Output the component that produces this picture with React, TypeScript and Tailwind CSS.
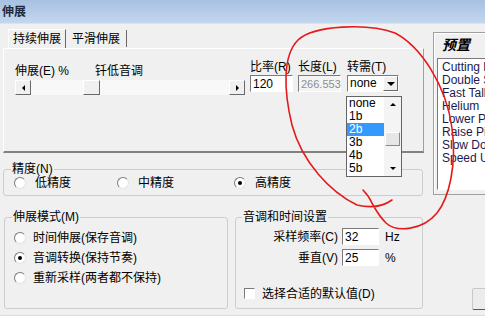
import React from "react";

function Arrow({ dir, size = 5 }: { dir: "left" | "right" | "up" | "down"; size?: number }) {
  const pts = {
    left: "4,0 4,8 0,4",
    right: "0,0 0,8 4,4",
    up: "0,4 8,4 4,0",
    down: "0,0 8,0 4,4",
  }[dir];
  const w = dir === "left" || dir === "right" ? 4 : 8;
  const h = dir === "left" || dir === "right" ? 8 : 4;
  return (
    <svg width={(w * size) / 8} height={(h * size) / 8} viewBox={`0 0 ${w} ${h}`}>
      <polygon points={pts} fill="#000" />
    </svg>
  );
}

function Radio({ checked = false }: { checked?: boolean }) {
  return (
    <span className="flex h-[12px] w-[12px] shrink-0 items-center justify-center rounded-full border border-[#7a7a7a] border-r-[#e3e3e3] border-b-[#e3e3e3] bg-white">
      {checked && <span className="h-[4px] w-[4px] rounded-full bg-black" />}
    </span>
  );
}

function Edit({ value, disabled = false, w }: { value: string; disabled?: boolean; w: string }) {
  return (
    <div
      className={`${w} flex h-[17px] items-center border border-[#7a7a7a] border-r-white border-b-white pl-[2px] ${
        disabled ? "bg-[#f4f4f4] text-[11px] text-[#8d8d8d]" : "bg-white"
      }`}
    >
      {value}
    </div>
  );
}

function ScrollBtn({ dir }: { dir: "left" | "right" }) {
  return (
    <div className="flex h-[15px] w-[16px] items-center justify-center border border-white border-r-[#696969] border-b-[#696969] bg-[#f0f0f0]">
      <Arrow dir={dir} size={6} />
    </div>
  );
}

const presets = ["Cutting Pitch", "Double Speed", "Fast Talk", "Helium", "Lower Pitch", "Raise Pitch", "Slow Down", "Speed Up"];
const keys = ["none", "1b", "2b", "3b", "4b", "5b"];

export default function App() {
  return (
    <div className="relative flex h-[324px] w-[500px] overflow-hidden bg-white font-['Liberation_Sans','Noto_Sans_CJK_SC',sans-serif] text-[12px] leading-[14px] text-black">
      <div className="flex h-[316px] w-[485px] shrink-0 flex-col overflow-hidden border-b border-[#cfdff0] bg-[#f0f0f0]">
        {/* title bar */}
        <div className="flex h-[24px] shrink-0 items-center border-b border-[#d5e3f2] bg-gradient-to-b from-[#a7c1e2] to-[#c3d7ee] pl-[2px] font-bold text-[#1e2a3a]">
          伸展
        </div>

        <div className="flex">
          {/* left column */}
          <div className="w-[424px] shrink-0 pl-[3px]">
            {/* tabs */}
            <div className="mt-[5px] flex h-[19px] items-end pl-[5px]">
              <div className="flex h-[19px] items-center border border-b-0 border-white border-r-[#696969] px-[4px]">持续伸展</div>
              <div className="mb-[1px] flex h-[17px] items-center border-r border-[#696969] px-[6px]">平滑伸展</div>
            </div>
            <div className="flex h-[105px] w-[421px] border border-white border-r-[#a0a0a0] border-b-2 border-b-[#808080] pl-[11px] pt-[11px]">
              <div className="w-[230px]">
                <div className="mt-[4px] flex h-[14px]">
                  <span className="w-[80px]">伸展(E) %</span>
                  <span>钎低音调</span>
                </div>
                <div className="mt-[2px] flex h-[15px] bg-[#f8f8f8]">
                  <ScrollBtn dir="left" />
                  <div className="ml-[52px] h-[15px] w-[17px] border border-white border-r-[#696969] border-b-[#696969] bg-[#f0f0f0]" />
                  <div className="flex-1" />
                  <ScrollBtn dir="right" />
                </div>
              </div>
              <div className="ml-[5px] w-[43px]">
                <div className="h-[14px]">比率(R)</div>
                <div className="mt-[1px]">
                  <Edit value="120" w="w-[43px]" />
                </div>
              </div>
              <div className="ml-[5px] w-[43px]">
                <div className="h-[14px]">长度(L)</div>
                <div className="mt-[1px]">
                  <Edit value="266.553" disabled w="w-[43px]" />
                </div>
              </div>
              <div className="relative ml-[6px] w-[52px]">
                <div className="h-[14px]">转需(T)</div>
                <div className="mt-[1px] flex h-[17px] border border-[#7a7a7a] border-r-white border-b-white bg-white">
                  <span className="flex-1 pl-[2px] leading-[15px]">none</span>
                  <div className="flex w-[15px] items-center justify-center border border-white border-r-[#696969] border-b-[#696969] bg-[#f0f0f0]">
                    <Arrow dir="down" size={8} />
                  </div>
                </div>
                {/* open drop-down list */}
                <div className="absolute left-[-1px] top-[36px] z-10 flex h-[81px] w-[56px] border border-[#646464] bg-white">
                  <div className="w-[37px]">
                    {keys.map((k) => (
                      <div
                        key={k}
                        className={`h-[13px] pl-[2px] text-[12px] leading-[13px] ${k === "2b" ? "bg-[#3399ff] text-white" : ""}`}
                      >
                        {k}
                      </div>
                    ))}
                  </div>
                  <div className="flex w-[17px] flex-col bg-[#f4f4f4]">
                    <div className="flex h-[15px] items-center justify-center">
                      <Arrow dir="up" size={6} />
                    </div>
                    <div className="mx-[1px] mt-[20px] h-[14px] border border-white border-r-[#8a8a8a] border-b-[#8a8a8a] bg-[#e6e6e6]" />
                    <div className="flex-1" />
                    <div className="flex h-[15px] items-center justify-center">
                      <Arrow dir="down" size={6} />
                    </div>
                  </div>
                </div>
              </div>
            </div>

            {/* precision */}
            <fieldset className="mt-[9px] w-[420px] rounded-[3px] border border-[#cdcdcd] pb-[5px]">
              <legend className="ml-[7px] px-[1px] leading-[14px]">精度(N)</legend>
              <div className="flex h-[14px] items-center pl-[10px]">
                <div className="flex w-[103px] items-center">
                  <Radio />
                  <span className="ml-[9px]">低精度</span>
                </div>
                <div className="flex w-[117px] items-center">
                  <Radio />
                  <span className="ml-[9px]">中精度</span>
                </div>
                <div className="flex items-center">
                  <Radio checked />
                  <span className="ml-[9px]">高精度</span>
                </div>
              </div>
            </fieldset>

            {/* bottom groups */}
            <div className="mt-[14px] flex">
              <fieldset className="ml-[1px] h-[99px] w-[224px] rounded-[3px] border border-[#cdcdcd]">
                <legend className="ml-[7px] px-[1px] leading-[14px]">伸展模式(M)</legend>
                <div className="pl-[9px] pt-[4px]">
                  {[
                    ["时间伸展(保存音调)", false],
                    ["音调转换(保持节奏)", true],
                    ["重新采样(两者都不保持)", false],
                  ].map(([t, c]) => (
                    <div key={t as string} className="flex h-[20px] items-center">
                      <Radio checked={c as boolean} />
                      <span className="ml-[7px]">{t as string}</span>
                    </div>
                  ))}
                </div>
              </fieldset>
              <fieldset className="ml-[7px] h-[99px] w-[188px] rounded-[3px] border border-[#cdcdcd]">
                <legend className="ml-[6px] px-[1px] leading-[14px]">音调和时间设置</legend>
                <div className="pt-[4px]">
                  <div className="flex h-[17px] items-center">
                    <span className="w-[102px] text-right">采样频率(C)</span>
                    <div className="ml-[4px]">
                      <Edit value="32" w="w-[37px]" />
                    </div>
                    <span className="ml-[6px]">Hz</span>
                  </div>
                  <div className="mt-[4px] flex h-[17px] items-center">
                    <span className="w-[102px] text-right">垂直(V)</span>
                    <div className="ml-[4px]">
                      <Edit value="25" w="w-[37px]" />
                    </div>
                    <span className="ml-[6px]">%</span>
                  </div>
                  <div className="mt-[20px] flex h-[15px] items-center pl-[8px]">
                    <span className="h-[11px] w-[11px] border border-[#7a7a7a] border-r-white border-b-white bg-white" />
                    <span className="ml-[7px]">选择合适的默认值(D)</span>
                  </div>
                </div>
              </fieldset>
            </div>
          </div>

          {/* right column */}
          <div className="ml-[9px] flex-1">
            <div className="mt-[8px] h-[163px] w-[70px] border border-[#a0a0a0] shadow-[inset_1px_1px_0_#ffffff]">
              <div className="pl-[8px] pt-[4px] text-[14px] font-bold italic leading-[16px]">预置</div>
              <div className="ml-[3px] mt-[5px] h-[132px] w-[62px] border border-[#7a7a7a] border-r-white border-b-white bg-white pl-[4px] pt-[2px]">
                {presets.map((p) => (
                  <div key={p} className="h-[13px] whitespace-nowrap leading-[13px] text-[#1a1a50]">
                    {p}
                  </div>
                ))}
              </div>
            </div>
            <div className="ml-[39px] mt-[93px] h-[22px] w-[40px] rounded-[2px] border border-[#c8c8c8] border-b-[#5a5a5a] bg-[#ececec]" />
          </div>
        </div>
      </div>

      {/* red hand-drawn annotation */}
      <svg className="pointer-events-none absolute left-0 top-0" width="500" height="324" viewBox="0 0 500 324">
        <path
          d="M 392 200 Q 378 210 357 205 C 330 192 302 162 292 125 C 284 92 282 56 298 40 C 314 25 368 23 395 33 C 420 46 446 84 452 128 C 457 165 449 198 437 213 C 423 230 397 233 386 223 C 379 216 376 210 373 205 C 370 198 366 193 363 190"
          fill="none"
          stroke="#e31b1b"
          strokeWidth="1.6"
          strokeLinecap="round"
        />
      </svg>
    </div>
  );
}
